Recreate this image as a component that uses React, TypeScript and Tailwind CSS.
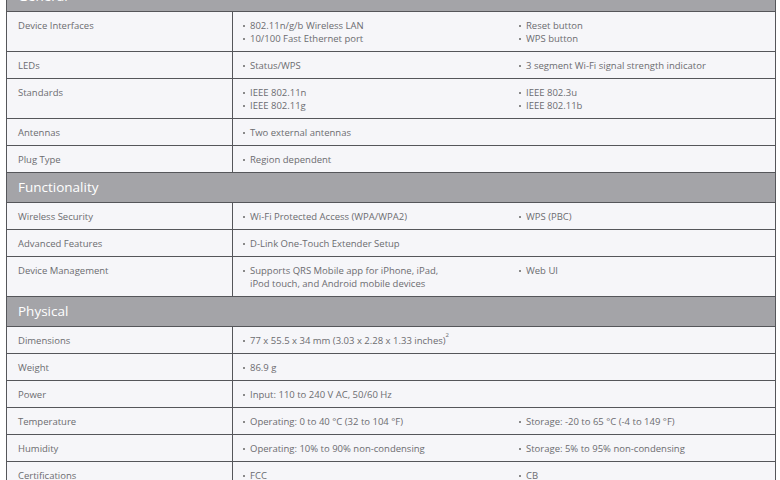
import React from 'react';

type Row = { label: string; a: React.ReactNode[]; b?: React.ReactNode[] };
type Section = { title: string; rows: Row[] };

const sections: Section[] = [
  {
    title: 'General',
    rows: [
      { label: 'Device Interfaces', a: ['802.11n/g/b Wireless LAN', '10/100 Fast Ethernet port'], b: ['Reset button', 'WPS button'] },
      { label: 'LEDs', a: ['Status/WPS'], b: ['3 segment Wi-Fi signal strength indicator'] },
      { label: 'Standards', a: ['IEEE 802.11n', 'IEEE 802.11g'], b: ['IEEE 802.3u', 'IEEE 802.11b'] },
      { label: 'Antennas', a: ['Two external antennas'] },
      { label: 'Plug Type', a: ['Region dependent'] },
    ],
  },
  {
    title: 'Functionality',
    rows: [
      { label: 'Wireless Security', a: ['Wi-Fi Protected Access (WPA/WPA2)'], b: ['WPS (PBC)'] },
      { label: 'Advanced Features', a: ['D-Link One-Touch Extender Setup'] },
      {
        label: 'Device Management',
        a: [
          <>
            Supports QRS Mobile app for iPhone, iPad,
            <br />
            iPod touch, and Android mobile devices
          </>,
        ],
        b: ['Web UI'],
      },
    ],
  },
  {
    title: 'Physical',
    rows: [
      {
        label: 'Dimensions',
        a: [
          <>
            77 x 55.5 x 34 mm (3.03 x 2.28 x 1.33 inches)<sup className="text-[6px] align-super">2</sup>
          </>,
        ],
      },
      { label: 'Weight', a: ['86.9 g'] },
      { label: 'Power', a: ['Input: 110 to 240 V AC, 50/60 Hz'] },
      { label: 'Temperature', a: ['Operating: 0 to 40 °C (32 to 104 °F)'], b: ['Storage: -20 to 65 °C (-4 to 149 °F)'] },
      { label: 'Humidity', a: ['Operating: 10% to 90% non-condensing'], b: ['Storage: 5% to 95% non-condensing'] },
      { label: 'Certifications', a: ['FCC'], b: ['CB'] },
    ],
  },
];

// small square bullet + text, one line per item
function Items({ items }: { items?: React.ReactNode[] }) {
  if (!items) return null;
  return (
    <div className="flex flex-col">
      {items.map((it, i) => (
        <div key={i} className="flex items-start">
          <span className="mt-[6px] mr-[5px] h-[2px] w-[2px] shrink-0 bg-[#8a8a8a]" />
          <span>{it}</span>
        </div>
      ))}
    </div>
  );
}

function App() {
  return (
    <div className="h-[480px] w-[780px] overflow-hidden bg-white" style={{ fontFamily: '"Open Sans", "Noto Sans", sans-serif' }}>
      <div className="ml-[6px] mt-[-18px] w-[770px] border-x border-[#55565a] text-[9.5px] leading-[13px] text-[#6c6c70]">
        {sections.map((s) => (
          <div key={s.title}>
            <div className="flex h-[30px] items-center border-b border-[#55565a] bg-[#a4a4a8] pl-[11px] text-[13.5px] text-white">
              {s.title}
            </div>
            {s.rows.map((r) => (
              <div key={r.label} className="grid grid-cols-[226px_280px_1fr] border-b border-[#55565a] bg-[#f6f6f9]">
                <div className="border-r border-[#55565a] pl-[11px] pt-[7px] pb-[6px]">{r.label}</div>
                <div className="pl-[10px] pt-[7px] pb-[6px]">
                  <Items items={r.a} />
                </div>
                <div className="pl-[6px] pt-[7px] pb-[6px]">
                  <Items items={r.b} />
                </div>
              </div>
            ))}
          </div>
        ))}
      </div>
    </div>
  );
}

export default App;
